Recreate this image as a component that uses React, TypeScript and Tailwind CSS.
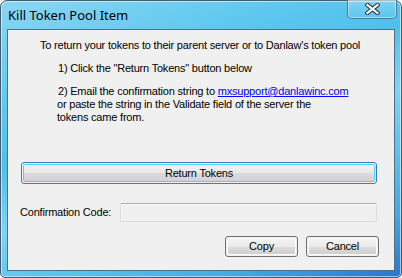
import React from "react";

const body = { fontFamily: '"Liberation Sans", Arial, sans-serif' } as React.CSSProperties;

function WinButton({ label, className }: { label: string; className: string }) {
  return (
    <div
      className={`flex items-center justify-center rounded-[3px] border border-[#707070] p-px ${className}`}
    >
      <div className="flex h-full w-full items-center justify-center rounded-[2px] border border-[#fcfcfc] bg-[linear-gradient(to_bottom,#f2f2f2_0%,#ebebeb_50%,#dddddd_50%,#cfcfcf_100%)] text-[11px] text-black leading-none">
        {label}
      </div>
    </div>
  );
}

export default function App() {
  return (
    <div className="h-[278px] w-[402px] bg-white">
      <div className="relative flex h-[278px] w-[402px] flex-col rounded-t-[7px] rounded-b-[5px] border border-[#3b5f78] bg-[linear-gradient(160deg,#8cd6f4_0%,#5ec8ef_25%,#4fc0ec_40%,#7fd3f5_55%,#5cc2ee_70%,#45a8e2_85%,#2a74cc_100%)] shadow-[inset_0_0_0_1px_rgba(255,255,255,0.55)]">
        {/* title bar */}
        <div className="flex h-[28px] shrink-0 items-start justify-between">
          <div
            className="pl-[7px] pt-[6px] text-[13px] leading-[16px] text-black"
            style={{ fontFamily: '"Noto Sans", "Open Sans", sans-serif' }}
          >
            Kill Token Pool Item
          </div>
          <div className="mr-[4px] mt-[-1px] flex h-[19px] w-[50px] items-center justify-center rounded-b-[5px] border border-t-0 border-[#4e7a96] bg-[linear-gradient(to_bottom,rgba(255,255,255,0.25),rgba(255,255,255,0.05))] shadow-[inset_0_0_0_1px_rgba(255,255,255,0.45)]">
            <svg width="15" height="12" viewBox="0 0 15 12">
              <path d="M2.5 2 L12.5 10 M12.5 2 L2.5 10" stroke="#2c3a44" strokeWidth="4.2" strokeLinecap="square" />
              <path d="M2.5 2 L12.5 10 M12.5 2 L2.5 10" stroke="#ffffff" strokeWidth="2.2" strokeLinecap="square" />
            </svg>
          </div>
        </div>
        {/* client area */}
        <div
          className="mx-[6px] flex h-[242px] shrink-0 flex-col border border-[#4a7188] bg-[#f0f0f0] text-[11px] leading-[13px] tracking-[-0.2px] text-black"
          style={body}
        >
          <div className="ml-[32px] mt-[9px]">To return your tokens to their parent server or to Danlaw&apos;s token pool</div>
          <div className="ml-[50px] mt-[10px]">1) Click the &quot;Return Tokens&quot; button below</div>
          <div className="ml-[49px] mt-[10px]">
            <div className="pl-[1px]">
              2) Email the confirmation string to{" "}
              <span className="text-[#0000ff] underline">mxsupport@danlawinc.com</span>
            </div>
            <div>or paste the string in the Validate field of the server the</div>
            <div>tokens came from.</div>
          </div>
          <div className="ml-[13px] mt-[38px] h-[22px] w-[356px] rounded-[3px] border border-[#3c7fb1] p-px">
            <div className="flex h-full w-full items-center justify-center rounded-[2px] border border-[#48d5ff] bg-[linear-gradient(to_bottom,#f0f0f0_0%,#e8e8e8_50%,#dcdcdc_50%,#d2d2d2_100%)] leading-none">
              Return Tokens
            </div>
          </div>
          <div className="ml-[12px] mt-[19px] flex items-center">
            <div className="w-[100px]">Confirmation Code:</div>
            <div className="h-[19px] w-[257px] rounded-[2px] border border-[#dcdcdc] border-t-[#abadb3] bg-[#f0f0f0] shadow-[inset_1px_1px_0_#f8f8f8]" />
          </div>
          <div className="mr-[15px] mt-[14px] flex justify-end gap-[8px]">
            <WinButton label="Copy" className="h-[21px] w-[73px]" />
            <WinButton label="Cancel" className="h-[21px] w-[73px]" />
          </div>
        </div>
      </div>
    </div>
  );
}
